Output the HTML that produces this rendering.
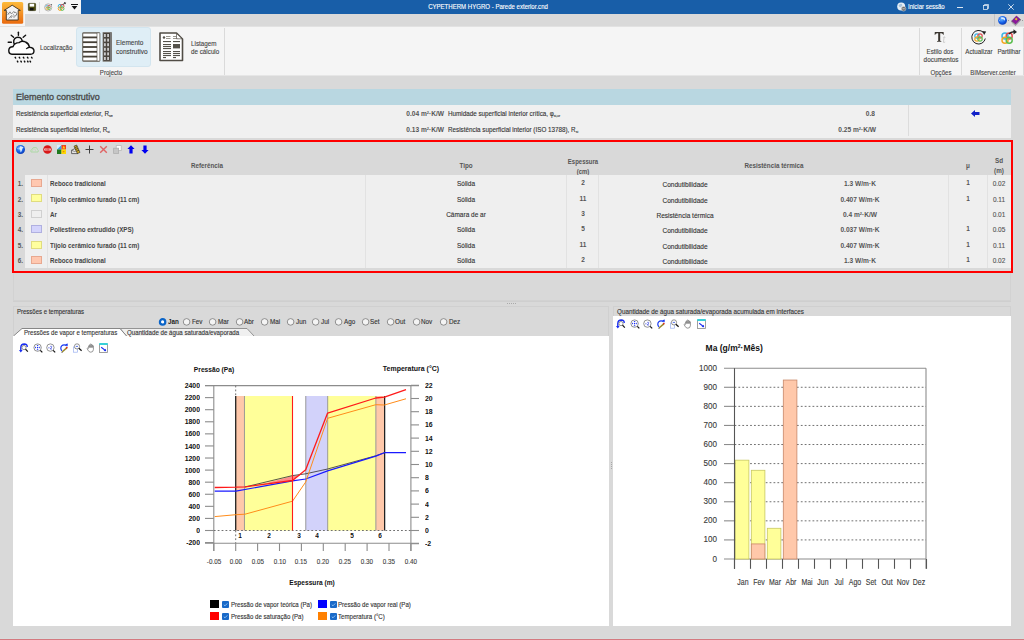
<!DOCTYPE html>
<html><head><meta charset="utf-8"><title>CYPETHERM HYGRO</title>
<style>
html,body{margin:0;padding:0;}
body{width:1024px;height:640px;overflow:hidden;position:relative;background:#d9d9d9;font-family:"Liberation Sans",sans-serif;}
.t{position:absolute;white-space:nowrap;line-height:1;font-family:"Liberation Sans",sans-serif;}
.t.lh{line-height:1}
.r{position:absolute;}
sub{font-size:55%;vertical-align:-0.3em;line-height:0}
sup{font-size:60%;vertical-align:0.55em;line-height:0}
svg.r{overflow:visible}
</style></head><body>

<div class="r" style="left:0px;top:0px;width:1024px;height:640px;background:#d9d9d9;"></div>
<div class="r" style="left:81px;top:0px;width:943px;height:14px;background:#185ea8;"></div>
<div class="r" style="left:0px;top:0px;width:81px;height:14px;background:#f5f5f5;"></div>
<div class="r" style="left:0px;top:14px;width:25px;height:12px;background:#f5f5f5;"></div>
<svg class="r" style="left:2px;top:2px;" width="22" height="22" viewBox="0 0 22 22"><defs><linearGradient id="og" x1="0" y1="0" x2="0" y2="1"><stop offset="0" stop-color="#fdbb3c"/><stop offset="1" stop-color="#ea6a0e"/></linearGradient></defs>
<rect x="0" y="0" width="21.2" height="21.8" rx="1.6" fill="url(#og)"/>
<path d="M2.1 8.4 L10.2 3.2 L18.3 8.4 L16.2 8.4 L16.2 18 L4.3 18 L4.3 8.4 Z" fill="#f4f4f4" stroke="#3c3222" stroke-width="0.9" stroke-linejoin="round"/>
<g stroke="#7a7a7a" stroke-width="0.8" fill="none"><path d="M5.6 13 L8 9.8 L9.5 12 L11.5 9.6 L13 11"/><path d="M6.5 16.5 L10 13.5 L12 15.5 L15 12"/><path d="M12.5 9.8 L15 11.4 L14 13.5"/><path d="M5.6 10.5 L7 12.2 M8.5 14 L9.5 16 M11 12.5 L12.5 13.5"/></g></svg>
<svg class="r" style="left:28px;top:3px;" width="8" height="8" viewBox="0 0 8 8"><rect x="0.4" y="0.4" width="7.2" height="7.2" rx="0.6" fill="#4b4b10" stroke="#2d2d00" stroke-width="0.6"/><rect x="1.6" y="0.8" width="4.6" height="2.8" fill="#fff"/><rect x="2" y="5" width="3.5" height="2.4" fill="#111"/></svg>
<div class="r" style="left:39px;top:2px;width:1px;height:11px;background:#dcdcdc;"></div>
<svg class="r" style="left:44px;top:3px;" width="9" height="9" viewBox="0 0 9 9"><circle cx="4.2" cy="4.4" r="3.6" fill="none" stroke="#999" stroke-width="0.7"/><circle cx="3.3" cy="3.6" r="1.3" fill="none" stroke="#3cb4e6" stroke-width="0.8"/><circle cx="5" cy="3.6" r="1.3" fill="none" stroke="#e05050" stroke-width="0.8"/><circle cx="3.3" cy="5.3" r="1.3" fill="none" stroke="#f5a623" stroke-width="0.8"/><circle cx="5" cy="5.3" r="1.3" fill="none" stroke="#5cbf50" stroke-width="0.8"/><path d="M7 1 L8.2 1.6 L7.4 2.6Z" fill="#333"/></svg>
<svg class="r" style="left:57px;top:2px;" width="9" height="10" viewBox="0 0 9 10"><circle cx="3" cy="4.2" r="1.8" fill="none" stroke="#3cb4e6" stroke-width="1"/><circle cx="5.2" cy="4.2" r="1.8" fill="none" stroke="#e05050" stroke-width="1"/><circle cx="3" cy="6.6" r="1.8" fill="none" stroke="#f5a623" stroke-width="1"/><circle cx="5.2" cy="6.6" r="1.8" fill="none" stroke="#5cbf50" stroke-width="1"/><path d="M5.5 2.8 L8 1 M7 0.6 L8.6 0.8 L8 2.2" stroke="#333" stroke-width="0.9" fill="none"/></svg>
<svg class="r" style="left:71px;top:4px;" width="7" height="6" viewBox="0 0 7 6"><rect x="0" y="0" width="7" height="1" fill="#111"/><path d="M0.6 2 L6.4 2 L3.5 5.4 Z" fill="#111"/></svg>
<div class="t" style="left:188.40px;width:600px;text-align:center;top:3.77px;font-size:6.66px;font-weight:normal;color:#ffffff;transform:scaleX(0.9091);transform-origin:50% 0;-webkit-text-stroke:0.12px #ffffff;">CYPETHERM HYGRO - Parede exterior.cnd</div>
<svg class="r" style="left:897px;top:2px;" width="10" height="10" viewBox="0 0 10 10"><circle cx="4.2" cy="4.4" r="4" fill="#e6eef5"/><path d="M1.5 3.5 Q3 1 5 2 Q6 4 4 5 Q2.5 6 1.5 3.5Z" fill="#a8c4dc"/><circle cx="6.6" cy="6.8" r="2.3" fill="#6b6b6b" stroke="#ddd" stroke-width="0.5"/><rect x="5.4" y="6.5" width="2.4" height="0.7" fill="#eee"/></svg>
<div class="t" style="left:908.30px;top:3.81px;font-size:6.60px;font-weight:normal;color:#ffffff;transform:scaleX(0.9091);transform-origin:0 0;-webkit-text-stroke:0.12px #ffffff;">Iniciar sessão</div>
<div class="r" style="left:957px;top:7px;width:6px;height:1px;background:rgba(255,255,255,0.85);"></div>
<svg class="r" style="left:983px;top:4px;" width="6" height="6" viewBox="0 0 6 6"><rect x="0.5" y="1.5" width="4" height="4" fill="none" stroke="rgba(255,255,255,0.9)" stroke-width="0.75"/><path d="M1.5 1.5 L1.5 0.5 L5.5 0.5 L5.5 4.5 L4.5 4.5" fill="none" stroke="rgba(255,255,255,0.9)" stroke-width="0.75"/></svg>
<svg class="r" style="left:1008px;top:4px;" width="6" height="6" viewBox="0 0 6 6"><path d="M0.3 0.3 L5.7 5.7 M5.7 0.3 L0.3 5.7" stroke="rgba(255,255,255,0.92)" stroke-width="0.85"/></svg>
<div class="r" style="left:994px;top:14px;width:1px;height:12px;background:#c4c4c4;"></div>
<svg class="r" style="left:998px;top:16px;" width="10" height="10" viewBox="0 0 10 10"><defs><radialGradient id="gg" cx="0.45" cy="0.35" r="0.75"><stop offset="0" stop-color="#5fb0ff"/><stop offset="0.6" stop-color="#1a66e8"/><stop offset="1" stop-color="#0838b8"/></radialGradient></defs><circle cx="4.5" cy="4.4" r="4.4" fill="url(#g2)"/><path d="M2.6 1.6 Q5 0.8 6.8 2 Q7.6 3.2 6.6 4.8 Q6 3.2 4.2 3 Q3 3.2 2.6 1.6 Z" fill="#e8f6ff" opacity="0.9"/><path d="M1 4.5 L2 3.8 L2.2 5.4 Z" fill="#d8ecff" opacity="0.7"/></svg>
<div class="r" style="left:1008px;top:20px;width:1px;height:1px;background:#9a9a9a;"></div>
<svg class="r" style="left:1011px;top:15px;" width="10" height="11" viewBox="0 0 10 11"><path d="M0.6 6.2 L5.4 1 L9.4 4.4 L4.6 9.6 Z" fill="#8a1a9a" stroke="#5a0a6a" stroke-width="0.5"/><path d="M0.6 6.2 L1 7.6 L4.6 10.6 L9.4 5.6 L9.4 4.4 L4.6 9.6 Z" fill="#d8d8d8" stroke="#555" stroke-width="0.4"/><path d="M4.8 10 L9 5.6" stroke="#b070c0" stroke-width="0.6" stroke-dasharray="0.8 0.6"/><rect x="4.2" y="3.2" width="2" height="2" fill="#f0c020" transform="rotate(40 5.2 4.2)"/></svg>
<div class="r" style="left:1022px;top:20px;width:1px;height:1px;background:#9a9a9a;"></div>
<div class="r" style="left:0px;top:26px;width:1024px;height:49px;background:#f5f5f5;"></div>
<div class="r" style="left:0px;top:26px;width:1024px;height:1px;background:#e2e2e2;"></div>
<div class="r" style="left:0px;top:75px;width:1024px;height:1px;background:#e6e6e6;"></div>
<svg class="r" style="left:0px;top:26px;" width="40" height="50" viewBox="0 0 40 50"><g stroke="#111" stroke-width="1.4" fill="none" stroke-linecap="round">
<path d="M18.4 6.2 L18.4 9.2"/><path d="M11.2 9.2 L13.6 11.2"/><path d="M23.2 11.2 L25.6 9.2"/><path d="M8.2 16.2 L11.4 16.2"/>
<path d="M14.6 18.2 A4.3 4.3 0 1 1 22.2 14.8"/></g>
<path d="M12 28.2 Q8.6 28 8.8 24.2 Q9.2 20.6 13 20.8 Q14.5 16.6 19 16.6 Q22 14.2 25.5 16 Q29 17.6 29.4 21.2 Q34 21.6 34 25 Q33.8 28.2 30.5 28.2 Z" fill="#fff" stroke="#111" stroke-width="1.4" stroke-linejoin="round"/>
<path d="M29.4 21.3 Q27.4 21.5 26.2 23" fill="none" stroke="#111" stroke-width="1.2"/>
<g stroke="#111" stroke-width="1.5" stroke-linecap="round">
<path d="M15.2 31.3 L15.6 32"/><path d="M19.3 31.3 L19.7 32"/><path d="M23.4 31.3 L23.8 32"/><path d="M27.5 31.3 L27.9 32"/><path d="M31.6 31.3 L32 32"/>
<path d="M17.4 35.2 L17.8 35.9"/><path d="M20.9 35.2 L21.3 35.9"/><path d="M24.4 35.2 L24.8 35.9"/><path d="M27.6 35.2 L28 35.9"/><path d="M30.1 35.2 L30.5 35.9"/></g></svg>
<div class="t" style="left:39.80px;top:43.75px;font-size:7.38px;font-weight:normal;color:#444;transform:scaleX(0.8333);transform-origin:0 0;-webkit-text-stroke:0.12px #444;">Localização</div>
<div class="r" style="left:76px;top:27px;width:75px;height:40px;background:#dfeef6;border-radius:3px;box-sizing:border-box;border:1px solid #d3e5ef;"></div>
<svg class="r" style="left:82px;top:32px;" width="31" height="30" viewBox="0 0 31 30"><rect x="0.5" y="0.5" width="17.5" height="29" rx="1" fill="#464037" stroke="#7a766f" stroke-width="0.8"/><rect x="1.2" y="1.5" width="13.5" height="3" fill="#fff"/><rect x="1.2" y="6.3" width="13.5" height="3" fill="#fff"/><rect x="1.2" y="11.1" width="13.5" height="3" fill="#fff"/><rect x="1.2" y="15.9" width="13.5" height="3" fill="#fff"/><rect x="1.2" y="20.7" width="13.5" height="3" fill="#fff"/><rect x="1.2" y="25.5" width="13.5" height="3" fill="#fff"/><rect x="15.3" y="1.2" width="2.2" height="27.6" fill="#fff"/>
<rect x="21" y="0.6" width="8.5" height="28.6" fill="#4a453e" stroke="#7a766f" stroke-width="0.8"/><rect x="22" y="2.0" width="1.8" height="3" fill="#ccc"/><rect x="25.2" y="2.0" width="1.8" height="3" fill="#ccc"/><rect x="22" y="6.6" width="1.8" height="3" fill="#ccc"/><rect x="25.2" y="6.6" width="1.8" height="3" fill="#ccc"/><rect x="22" y="11.2" width="1.8" height="3" fill="#ccc"/><rect x="25.2" y="11.2" width="1.8" height="3" fill="#ccc"/><rect x="22" y="15.8" width="1.8" height="3" fill="#ccc"/><rect x="25.2" y="15.8" width="1.8" height="3" fill="#ccc"/><rect x="22" y="20.4" width="1.8" height="3" fill="#ccc"/><rect x="25.2" y="20.4" width="1.8" height="3" fill="#ccc"/><rect x="22" y="25.0" width="1.8" height="3" fill="#ccc"/><rect x="25.2" y="25.0" width="1.8" height="3" fill="#ccc"/><rect x="28" y="0.6" width="1.5" height="28.6" fill="#777"/></svg>
<div class="t" style="left:115.80px;top:39.40px;font-size:7.80px;font-weight:normal;color:#444;transform:scaleX(0.8333);transform-origin:0 0;-webkit-text-stroke:0.12px #444;">Elemento</div>
<div class="t" style="left:115.80px;top:47.55px;font-size:7.86px;font-weight:normal;color:#444;transform:scaleX(0.8333);transform-origin:0 0;-webkit-text-stroke:0.12px #444;">construtivo</div>
<div class="t" style="left:-188.70px;width:600px;text-align:center;top:69.52px;font-size:6.71px;font-weight:normal;color:#444;transform:scaleX(0.9091);transform-origin:50% 0;-webkit-text-stroke:0.12px #444;">Projecto</div>
<svg class="r" style="left:159px;top:32px;" width="25" height="30" viewBox="0 0 25 30"><path d="M1 1 L17.5 1 L23.5 7 L23.5 28.5 L1 28.5 Z" fill="#fff" stroke="#514d46" stroke-width="1.6" stroke-linejoin="round"/><g fill="#55524b"><rect x="4" y="9" width="8" height="1.1"/><rect x="4" y="12" width="8" height="1.1"/><rect x="4" y="14" width="8" height="1.1"/><rect x="4" y="16" width="8" height="1.1"/><rect x="4" y="19" width="8" height="1.1"/><rect x="4" y="21" width="8" height="1.1"/><rect x="4" y="23" width="8" height="1.1"/><rect x="14" y="9" width="7" height="1.1"/><rect x="14" y="19" width="7" height="1.1"/><rect x="14" y="21" width="7" height="1.1"/><rect x="14" y="23" width="7" height="1.1"/><rect x="4" y="25" width="3" height="1.1"/><rect x="14" y="25" width="3" height="1.1"/><rect x="14" y="12" width="7" height="4.4"/><circle cx="5" cy="5.5" r="1.2"/><rect x="7" y="4" width="4.5" height="1" fill="#9a978f"/><rect x="7" y="6" width="4.5" height="1" fill="#9a978f"/><rect x="14" y="4" width="3.5" height="1" fill="#9a978f"/><rect x="14" y="6" width="5" height="1" fill="#9a978f"/></g><path d="M17.5 1.5 L17.5 6.8 L23 6.8 Z" fill="#fff" stroke="#514d46" stroke-width="0.7"/></svg>
<div class="t" style="left:191.00px;top:39.62px;font-size:7.54px;font-weight:normal;color:#444;transform:scaleX(0.8333);transform-origin:0 0;-webkit-text-stroke:0.12px #444;">Listagem</div>
<div class="t" style="left:191.00px;top:48.02px;font-size:7.54px;font-weight:normal;color:#444;transform:scaleX(0.8333);transform-origin:0 0;-webkit-text-stroke:0.12px #444;">de cálculo</div>
<div class="r" style="left:224px;top:28px;width:1px;height:47px;background:#dadada;"></div>
<div class="r" style="left:919px;top:28px;width:1px;height:47px;background:#dadada;"></div>
<div class="r" style="left:961px;top:28px;width:1px;height:47px;background:#dadada;"></div>
<div class="r" style="left:1023px;top:28px;width:1px;height:47px;background:#dadada;"></div>
<svg class="r" style="left:934px;top:31px;" width="14" height="13" viewBox="0 0 14 13"><path d="M0.8 1 L9.6 1 L9.8 3.8 L9.2 3.8 Q8.8 2.2 7.2 2.2 L6.2 2.2 L6.2 9.8 L7.4 10.2 L7.4 10.8 L3 10.8 L3 10.2 L4.2 9.8 L4.2 2.2 L3.2 2.2 Q1.6 2.2 1.2 3.8 L0.6 3.8 Z" fill="#3a3630"/>
<path d="M9.6 6 L10.6 4.8 L10.6 6.2 L11.6 6.2 L11.5 6.8 L10.5 6.8 L10 10.5 Q10.2 11.2 11.2 10.6 L11.2 11.2 Q9.6 12.4 9.1 11.2 L9.5 6.8 L8.8 6.8 Z" fill="#c8c8c8"/></svg>
<div class="t" style="left:640.20px;width:600px;text-align:center;top:49.23px;font-size:6.82px;font-weight:normal;color:#444;transform:scaleX(0.9091);transform-origin:50% 0;-webkit-text-stroke:0.12px #444;">Estilo dos</div>
<div class="t" style="left:640.60px;width:600px;text-align:center;top:55.94px;font-size:7.04px;font-weight:normal;color:#444;transform:scaleX(0.9091);transform-origin:50% 0;-webkit-text-stroke:0.12px #444;">documentos</div>
<div class="t" style="left:640.60px;width:600px;text-align:center;top:69.52px;font-size:6.71px;font-weight:normal;color:#444;transform:scaleX(0.9091);transform-origin:50% 0;-webkit-text-stroke:0.12px #444;">Opções</div>
<svg class="r" style="left:971px;top:30px;" width="16" height="15" viewBox="0 0 16 15"><path d="M12.5 2.5 A6.8 6.8 0 1 0 14.3 8.5" fill="none" stroke="#222" stroke-width="1"/><path d="M11 1 L15.2 1.6 L13.2 5 Z" fill="#222"/>
<circle cx="6" cy="6" r="2.2" fill="none" stroke="#3cb4e6" stroke-width="1.2"/><circle cx="9" cy="6" r="2.2" fill="none" stroke="#e05050" stroke-width="1.2"/><circle cx="6" cy="9" r="2.2" fill="none" stroke="#f5a623" stroke-width="1.2"/><circle cx="9" cy="9" r="2.2" fill="none" stroke="#5cbf50" stroke-width="1.2"/></svg>
<div class="t" style="left:679.10px;width:600px;text-align:center;top:48.61px;font-size:6.84px;font-weight:normal;color:#444;transform:scaleX(0.9091);transform-origin:50% 0;-webkit-text-stroke:0.12px #444;">Actualizar</div>
<svg class="r" style="left:1000px;top:29px;" width="18" height="16" viewBox="0 0 18 16"><circle cx="5" cy="7" r="3" fill="none" stroke="#3cb4e6" stroke-width="1.5"/><circle cx="9.2" cy="7" r="3" fill="none" stroke="#e05050" stroke-width="1.5"/><circle cx="5" cy="11.2" r="3" fill="none" stroke="#f5a623" stroke-width="1.5"/><circle cx="9.2" cy="11.2" r="3" fill="none" stroke="#5cbf50" stroke-width="1.5"/><path d="M9 5 Q11 2.5 14.5 2.8" fill="none" stroke="#222" stroke-width="1.6"/><path d="M13.5 0.3 L17 3 L13.5 5.5 Z" fill="#222"/></svg>
<div class="t" style="left:708.60px;width:600px;text-align:center;top:48.61px;font-size:6.84px;font-weight:normal;color:#444;transform:scaleX(0.9091);transform-origin:50% 0;-webkit-text-stroke:0.12px #444;">Partilhar</div>
<div class="t" style="left:693.00px;width:600px;text-align:center;top:69.59px;font-size:6.62px;font-weight:normal;color:#444;transform:scaleX(0.9091);transform-origin:50% 0;-webkit-text-stroke:0.12px #444;">BIMserver.center</div>
<div class="r" style="left:13px;top:89px;width:998px;height:16px;background:#b9d7e1;"></div>
<div class="t" style="left:15.50px;top:92.12px;font-size:9.90px;font-weight:normal;color:#4a4a4a;transform:scaleX(0.9091);transform-origin:0 0;-webkit-text-stroke:0.35px #4a4a4a;">Elemento construtivo</div>
<div class="r" style="left:13px;top:105px;width:998px;height:33px;background:#f0f0f0;"></div>
<div class="t" style="left:15.50px;top:110.73px;font-size:6.93px;font-weight:normal;color:#333;transform:scaleX(0.9091);transform-origin:0 0;-webkit-text-stroke:0.12px #333;">Resistência superficial exterior, R<sub>se</sub></div>
<div class="t" style="left:15.50px;top:126.53px;font-size:6.93px;font-weight:normal;color:#333;transform:scaleX(0.9091);transform-origin:0 0;-webkit-text-stroke:0.12px #333;">Resistência superficial interior, R<sub>si</sub></div>
<div class="t" style="left:-156.50px;width:600px;text-align:right;top:110.45px;font-size:7.26px;font-weight:bold;color:#555;transform:scaleX(0.9091);transform-origin:100% 0;">0.04 m<sup>2</sup>·K/W</div>
<div class="t" style="left:-156.50px;width:600px;text-align:right;top:126.25px;font-size:7.26px;font-weight:bold;color:#555;transform:scaleX(0.9091);transform-origin:100% 0;">0.13 m<sup>2</sup>·K/W</div>
<div class="t" style="left:448.00px;top:110.73px;font-size:6.93px;font-weight:normal;color:#333;transform:scaleX(0.9091);transform-origin:0 0;-webkit-text-stroke:0.12px #333;">Humidade superficial interior crítica, φ<sub>si,cr</sub></div>
<div class="t" style="left:448.00px;top:126.53px;font-size:6.93px;font-weight:normal;color:#333;transform:scaleX(0.9091);transform-origin:0 0;-webkit-text-stroke:0.12px #333;">Resistência superficial interior (ISO 13788), R<sub>si</sub></div>
<div class="t" style="left:275.00px;width:600px;text-align:right;top:110.45px;font-size:7.26px;font-weight:bold;color:#555;transform:scaleX(0.9091);transform-origin:100% 0;">0.8</div>
<div class="t" style="left:276.00px;width:600px;text-align:right;top:126.25px;font-size:7.26px;font-weight:bold;color:#555;transform:scaleX(0.9091);transform-origin:100% 0;">0.25 m<sup>2</sup>·K/W</div>
<div class="r" style="left:908px;top:105px;width:1px;height:31px;background:#dcdcdc;"></div>
<svg class="r" style="left:971px;top:110px;" width="9" height="7" viewBox="0 0 9 7"><path d="M0 3.5 L4 0 L4 2 L8.5 2 L8.5 5 L4 5 L4 7 Z" fill="#1020c8"/></svg>
<div class="r" style="left:12px;top:140px;width:1001px;height:133px;background:#d9d9d9;box-sizing:border-box;border:2px solid #ff0000;"></div>
<svg class="r" style="left:16px;top:145px;" width="9" height="9" viewBox="0 0 9 9"><defs><radialGradient id="g2" cx="0.4" cy="0.35" r="0.75"><stop offset="0" stop-color="#6ab8ff"/><stop offset="0.55" stop-color="#1560e8"/><stop offset="1" stop-color="#0a2ea0"/></radialGradient></defs><circle cx="4.5" cy="4.5" r="4.5" fill="url(#g2)"/><path d="M4 1.2 Q6.5 0.8 7.6 2.8 L6.4 3.6 L5.6 6.2 L4.6 7.6 L4.2 5 L3.2 4 Z" fill="#f0f6ff" opacity="0.9"/><path d="M1.2 3.5 L2.6 2.6 L2.4 4.6 Z" fill="#dfeeff" opacity="0.8"/></svg>
<svg class="r" style="left:30px;top:146px;" width="9" height="7" viewBox="0 0 9 7"><path d="M1 6 Q0 4 2 3.5 Q2.5 1 5 1.5 Q7 1 7.5 3.5 Q9 4.5 8 6 Z" fill="none" stroke="#a8d8a0" stroke-width="0.9"/><path d="M2.5 5.5 L2.5 3.8 L4 2.8 L5.5 3.8 L5.5 5.5" fill="none" stroke="#b8e0b0" stroke-width="0.6"/></svg>
<svg class="r" style="left:43px;top:145px;" width="9" height="9" viewBox="0 0 9 9"><circle cx="4.5" cy="4.5" r="4.3" fill="#d81818"/><rect x="1.2" y="3.4" width="6.6" height="2.2" rx="0.4" fill="#f8d8d8"/><path d="M2 4.5 L3 4.5 M3.6 3.8 L3.6 5.2 M4.6 3.8 L5.4 3.8 L5.4 5.2 L4.6 5.2 Z M6.2 3.8 L6.2 5.2" stroke="#d81818" stroke-width="0.5" fill="none"/></svg>
<svg class="r" style="left:57px;top:145px;" width="9" height="9" viewBox="0 0 9 9"><rect x="0" y="0" width="4.5" height="4.5" fill="#3aa0e8"/><path d="M0 0 L4.5 0 L0 4.5 Z" fill="#d8f0ff"/><rect x="4.5" y="0" width="4.5" height="4.5" fill="#f04020"/><path d="M6.8 0.6 L8.2 3.4 L5.4 3.4 Z" fill="#ffd800"/><rect x="0" y="4.5" width="4.5" height="4.5" fill="#1e7a1e"/><rect x="4.5" y="4.5" width="4.5" height="4.5" fill="#ffd800"/><rect x="5.8" y="6.2" width="1.6" height="1" fill="#e07010"/></svg>
<svg class="r" style="left:71px;top:145px;" width="9" height="9" viewBox="0 0 9 9"><path d="M0.6 5.2 L3.6 3.8 L6.6 5.2 L6.6 8.6 L0.6 8.6 Z" fill="#e8e8e8" stroke="#333" stroke-width="0.7"/><path d="M0.6 5.2 L3.6 6.6 L6.6 5.2" fill="none" stroke="#333" stroke-width="0.5"/><path d="M3 1.2 L5.6 0 L9 7.4 L6.4 8.6 Z" fill="#d8b020" stroke="#222" stroke-width="0.6"/><path d="M4 2.6 L6.2 1.6 M4.9 4.4 L7.1 3.4 M5.8 6.2 L8 5.2" stroke="#222" stroke-width="0.7"/></svg>
<svg class="r" style="left:85px;top:145px;" width="9" height="9" viewBox="0 0 9 9"><path d="M4.5 0.5 L4.5 8.5 M0.5 4.5 L8.5 4.5" stroke="#404040" stroke-width="1"/></svg>
<svg class="r" style="left:99px;top:145px;" width="9" height="9" viewBox="0 0 9 9"><path d="M1.2 1.2 L7.8 7.8 M7.8 1.2 L1.2 7.8" stroke="#e06464" stroke-width="1.4"/></svg>
<svg class="r" style="left:113px;top:145px;" width="9" height="9" viewBox="0 0 9 9"><rect x="3.2" y="0.6" width="5" height="5" fill="#fff" stroke="#b8b8b8" stroke-width="0.8"/><rect x="0.6" y="3.2" width="5" height="5.2" fill="#c6c6c6" stroke="#b0b0b0" stroke-width="0.8"/></svg>
<svg class="r" style="left:127px;top:145px;" width="8" height="9" viewBox="0 0 8 9"><path d="M4 0.3 L7.6 4 L5.6 4 L5.6 8.4 L2.4 8.4 L2.4 4 L0.4 4 Z" fill="#0000f0"/></svg>
<svg class="r" style="left:141px;top:145px;" width="8" height="9" viewBox="0 0 8 9"><path d="M4 8.7 L7.6 5 L5.6 5 L5.6 0.6 L2.4 0.6 L2.4 5 L0.4 5 Z" fill="#0000f0"/></svg>
<div class="t" style="left:-93.20px;width:600px;text-align:center;top:162.63px;font-size:6.93px;font-weight:bold;color:#555;transform:scaleX(0.9091);transform-origin:50% 0;">Referência</div>
<div class="t" style="left:166.00px;width:600px;text-align:center;top:162.63px;font-size:6.93px;font-weight:bold;color:#555;transform:scaleX(0.9091);transform-origin:50% 0;">Tipo</div>
<div class="t" style="left:282.50px;width:600px;text-align:center;top:159.01px;font-size:6.60px;font-weight:bold;color:#555;transform:scaleX(0.9091);transform-origin:50% 0;">Espessura</div>
<div class="t" style="left:282.50px;width:600px;text-align:center;top:168.61px;font-size:6.60px;font-weight:bold;color:#555;transform:scaleX(0.9091);transform-origin:50% 0;">(cm)</div>
<div class="t" style="left:474.00px;width:600px;text-align:center;top:162.63px;font-size:6.93px;font-weight:bold;color:#555;transform:scaleX(0.9091);transform-origin:50% 0;">Resistência térmica</div>
<div class="t" style="left:668.00px;width:600px;text-align:center;top:162.63px;font-size:6.93px;font-weight:bold;color:#555;transform:scaleX(0.9091);transform-origin:50% 0;">μ</div>
<div class="t" style="left:699.00px;width:600px;text-align:center;top:158.03px;font-size:6.93px;font-weight:bold;color:#555;transform:scaleX(0.9091);transform-origin:50% 0;">Sd</div>
<div class="t" style="left:699.00px;width:600px;text-align:center;top:167.73px;font-size:6.93px;font-weight:bold;color:#555;transform:scaleX(0.9091);transform-origin:50% 0;">(m)</div>
<div class="r" style="left:25px;top:175px;width:986px;height:93px;background:#efefef;"></div>
<div class="r" style="left:47px;top:175px;width:1px;height:93px;background:#e2e2e2;"></div>
<div class="r" style="left:365px;top:175px;width:1px;height:93px;background:#e2e2e2;"></div>
<div class="r" style="left:566px;top:175px;width:1px;height:93px;background:#e2e2e2;"></div>
<div class="r" style="left:598px;top:175px;width:1px;height:93px;background:#e2e2e2;"></div>
<div class="r" style="left:948px;top:175px;width:1px;height:93px;background:#e2e2e2;"></div>
<div class="r" style="left:987px;top:175px;width:1px;height:93px;background:#e2e2e2;"></div>
<div class="t" style="left:-577.50px;width:600px;text-align:right;top:180.63px;font-size:6.93px;font-weight:bold;color:#555;transform:scaleX(0.9091);transform-origin:100% 0;">1.</div>
<div class="r" style="left:31px;top:179px;width:11px;height:8px;background:#ffc8b0;box-sizing:border-box;border:1px solid #e8a890;"></div>
<div class="t" style="left:49.75px;top:180.73px;font-size:6.82px;font-weight:bold;color:#444;transform:scaleX(0.9091);transform-origin:0 0;">Reboco tradicional</div>
<div class="t" style="left:166.00px;width:600px;text-align:center;top:181.05px;font-size:7.15px;font-weight:normal;color:#333;transform:scaleX(0.9091);transform-origin:50% 0;-webkit-text-stroke:0.12px #333;">Sólida</div>
<div class="t" style="left:282.50px;width:600px;text-align:center;top:180.45px;font-size:7.15px;font-weight:bold;color:#555;transform:scaleX(0.9091);transform-origin:50% 0;">2</div>
<div class="t" style="left:385.00px;width:600px;text-align:center;top:181.00px;font-size:7.21px;font-weight:normal;color:#333;transform:scaleX(0.9091);transform-origin:50% 0;-webkit-text-stroke:0.12px #333;">Condutibilidade</div>
<div class="t" style="left:559.50px;width:600px;text-align:center;top:180.35px;font-size:7.26px;font-weight:bold;color:#555;transform:scaleX(0.9091);transform-origin:50% 0;">1.3 W/m·K</div>
<div class="t" style="left:668.00px;width:600px;text-align:center;top:180.45px;font-size:7.15px;font-weight:bold;color:#555;transform:scaleX(0.9091);transform-origin:50% 0;">1</div>
<div class="t" style="left:699.00px;width:600px;text-align:center;top:181.05px;font-size:7.15px;font-weight:normal;color:#555;transform:scaleX(0.9091);transform-origin:50% 0;-webkit-text-stroke:0.12px #555;">0.02</div>
<div class="t" style="left:-577.50px;width:600px;text-align:right;top:196.63px;font-size:6.93px;font-weight:bold;color:#555;transform:scaleX(0.9091);transform-origin:100% 0;">2.</div>
<div class="r" style="left:31px;top:194px;width:11px;height:8px;background:#ffff9e;box-sizing:border-box;border:1px solid #e0dc80;"></div>
<div class="t" style="left:49.75px;top:196.73px;font-size:6.82px;font-weight:bold;color:#444;transform:scaleX(0.9091);transform-origin:0 0;">Tijolo cerâmico furado (11 cm)</div>
<div class="t" style="left:166.00px;width:600px;text-align:center;top:197.05px;font-size:7.15px;font-weight:normal;color:#333;transform:scaleX(0.9091);transform-origin:50% 0;-webkit-text-stroke:0.12px #333;">Sólida</div>
<div class="t" style="left:282.50px;width:600px;text-align:center;top:196.45px;font-size:7.15px;font-weight:bold;color:#555;transform:scaleX(0.9091);transform-origin:50% 0;">11</div>
<div class="t" style="left:385.00px;width:600px;text-align:center;top:197.00px;font-size:7.21px;font-weight:normal;color:#333;transform:scaleX(0.9091);transform-origin:50% 0;-webkit-text-stroke:0.12px #333;">Condutibilidade</div>
<div class="t" style="left:559.50px;width:600px;text-align:center;top:196.35px;font-size:7.26px;font-weight:bold;color:#555;transform:scaleX(0.9091);transform-origin:50% 0;">0.407 W/m·K</div>
<div class="t" style="left:668.00px;width:600px;text-align:center;top:196.45px;font-size:7.15px;font-weight:bold;color:#555;transform:scaleX(0.9091);transform-origin:50% 0;">1</div>
<div class="t" style="left:699.00px;width:600px;text-align:center;top:197.05px;font-size:7.15px;font-weight:normal;color:#555;transform:scaleX(0.9091);transform-origin:50% 0;-webkit-text-stroke:0.12px #555;">0.11</div>
<div class="t" style="left:-577.50px;width:600px;text-align:right;top:211.63px;font-size:6.93px;font-weight:bold;color:#555;transform:scaleX(0.9091);transform-origin:100% 0;">3.</div>
<div class="r" style="left:31px;top:210px;width:11px;height:8px;background:#efefef;box-sizing:border-box;border:1px solid #d0d0d0;"></div>
<div class="t" style="left:49.75px;top:211.73px;font-size:6.82px;font-weight:bold;color:#444;transform:scaleX(0.9091);transform-origin:0 0;">Ar</div>
<div class="t" style="left:166.00px;width:600px;text-align:center;top:212.05px;font-size:7.15px;font-weight:normal;color:#333;transform:scaleX(0.9091);transform-origin:50% 0;-webkit-text-stroke:0.12px #333;">Câmara de ar</div>
<div class="t" style="left:282.50px;width:600px;text-align:center;top:211.45px;font-size:7.15px;font-weight:bold;color:#555;transform:scaleX(0.9091);transform-origin:50% 0;">3</div>
<div class="t" style="left:385.00px;width:600px;text-align:center;top:212.00px;font-size:7.21px;font-weight:normal;color:#333;transform:scaleX(0.9091);transform-origin:50% 0;-webkit-text-stroke:0.12px #333;">Resistência térmica</div>
<div class="t" style="left:559.50px;width:600px;text-align:center;top:211.35px;font-size:7.26px;font-weight:bold;color:#555;transform:scaleX(0.9091);transform-origin:50% 0;">0.4 m<sup>2</sup>·K/W</div>
<div class="t" style="left:668.00px;width:600px;text-align:center;top:211.45px;font-size:7.15px;font-weight:bold;color:#555;transform:scaleX(0.9091);transform-origin:50% 0;"></div>
<div class="t" style="left:699.00px;width:600px;text-align:center;top:212.05px;font-size:7.15px;font-weight:normal;color:#555;transform:scaleX(0.9091);transform-origin:50% 0;-webkit-text-stroke:0.12px #555;">0.01</div>
<div class="t" style="left:-577.50px;width:600px;text-align:right;top:226.63px;font-size:6.93px;font-weight:bold;color:#555;transform:scaleX(0.9091);transform-origin:100% 0;">4.</div>
<div class="r" style="left:31px;top:225px;width:11px;height:8px;background:#d4d4fc;box-sizing:border-box;border:1px solid #b0b0e0;"></div>
<div class="t" style="left:49.75px;top:226.73px;font-size:6.82px;font-weight:bold;color:#444;transform:scaleX(0.9091);transform-origin:0 0;">Poliestireno extrudido (XPS)</div>
<div class="t" style="left:166.00px;width:600px;text-align:center;top:227.05px;font-size:7.15px;font-weight:normal;color:#333;transform:scaleX(0.9091);transform-origin:50% 0;-webkit-text-stroke:0.12px #333;">Sólida</div>
<div class="t" style="left:282.50px;width:600px;text-align:center;top:226.45px;font-size:7.15px;font-weight:bold;color:#555;transform:scaleX(0.9091);transform-origin:50% 0;">5</div>
<div class="t" style="left:385.00px;width:600px;text-align:center;top:227.00px;font-size:7.21px;font-weight:normal;color:#333;transform:scaleX(0.9091);transform-origin:50% 0;-webkit-text-stroke:0.12px #333;">Condutibilidade</div>
<div class="t" style="left:559.50px;width:600px;text-align:center;top:226.35px;font-size:7.26px;font-weight:bold;color:#555;transform:scaleX(0.9091);transform-origin:50% 0;">0.037 W/m·K</div>
<div class="t" style="left:668.00px;width:600px;text-align:center;top:226.45px;font-size:7.15px;font-weight:bold;color:#555;transform:scaleX(0.9091);transform-origin:50% 0;">1</div>
<div class="t" style="left:699.00px;width:600px;text-align:center;top:227.05px;font-size:7.15px;font-weight:normal;color:#555;transform:scaleX(0.9091);transform-origin:50% 0;-webkit-text-stroke:0.12px #555;">0.05</div>
<div class="t" style="left:-577.50px;width:600px;text-align:right;top:242.63px;font-size:6.93px;font-weight:bold;color:#555;transform:scaleX(0.9091);transform-origin:100% 0;">5.</div>
<div class="r" style="left:31px;top:241px;width:11px;height:8px;background:#ffff9e;box-sizing:border-box;border:1px solid #e0dc80;"></div>
<div class="t" style="left:49.75px;top:242.73px;font-size:6.82px;font-weight:bold;color:#444;transform:scaleX(0.9091);transform-origin:0 0;">Tijolo cerâmico furado (11 cm)</div>
<div class="t" style="left:166.00px;width:600px;text-align:center;top:243.05px;font-size:7.15px;font-weight:normal;color:#333;transform:scaleX(0.9091);transform-origin:50% 0;-webkit-text-stroke:0.12px #333;">Sólida</div>
<div class="t" style="left:282.50px;width:600px;text-align:center;top:242.45px;font-size:7.15px;font-weight:bold;color:#555;transform:scaleX(0.9091);transform-origin:50% 0;">11</div>
<div class="t" style="left:385.00px;width:600px;text-align:center;top:243.00px;font-size:7.21px;font-weight:normal;color:#333;transform:scaleX(0.9091);transform-origin:50% 0;-webkit-text-stroke:0.12px #333;">Condutibilidade</div>
<div class="t" style="left:559.50px;width:600px;text-align:center;top:242.35px;font-size:7.26px;font-weight:bold;color:#555;transform:scaleX(0.9091);transform-origin:50% 0;">0.407 W/m·K</div>
<div class="t" style="left:668.00px;width:600px;text-align:center;top:242.45px;font-size:7.15px;font-weight:bold;color:#555;transform:scaleX(0.9091);transform-origin:50% 0;">1</div>
<div class="t" style="left:699.00px;width:600px;text-align:center;top:243.05px;font-size:7.15px;font-weight:normal;color:#555;transform:scaleX(0.9091);transform-origin:50% 0;-webkit-text-stroke:0.12px #555;">0.11</div>
<div class="t" style="left:-577.50px;width:600px;text-align:right;top:257.63px;font-size:6.93px;font-weight:bold;color:#555;transform:scaleX(0.9091);transform-origin:100% 0;">6.</div>
<div class="r" style="left:31px;top:256px;width:11px;height:8px;background:#ffc8b0;box-sizing:border-box;border:1px solid #e8a890;"></div>
<div class="t" style="left:49.75px;top:257.73px;font-size:6.82px;font-weight:bold;color:#444;transform:scaleX(0.9091);transform-origin:0 0;">Reboco tradicional</div>
<div class="t" style="left:166.00px;width:600px;text-align:center;top:258.05px;font-size:7.15px;font-weight:normal;color:#333;transform:scaleX(0.9091);transform-origin:50% 0;-webkit-text-stroke:0.12px #333;">Sólida</div>
<div class="t" style="left:282.50px;width:600px;text-align:center;top:257.45px;font-size:7.15px;font-weight:bold;color:#555;transform:scaleX(0.9091);transform-origin:50% 0;">2</div>
<div class="t" style="left:385.00px;width:600px;text-align:center;top:258.00px;font-size:7.21px;font-weight:normal;color:#333;transform:scaleX(0.9091);transform-origin:50% 0;-webkit-text-stroke:0.12px #333;">Condutibilidade</div>
<div class="t" style="left:559.50px;width:600px;text-align:center;top:257.35px;font-size:7.26px;font-weight:bold;color:#555;transform:scaleX(0.9091);transform-origin:50% 0;">1.3 W/m·K</div>
<div class="t" style="left:668.00px;width:600px;text-align:center;top:257.45px;font-size:7.15px;font-weight:bold;color:#555;transform:scaleX(0.9091);transform-origin:50% 0;">1</div>
<div class="t" style="left:699.00px;width:600px;text-align:center;top:258.05px;font-size:7.15px;font-weight:normal;color:#555;transform:scaleX(0.9091);transform-origin:50% 0;-webkit-text-stroke:0.12px #555;">0.02</div>
<div class="r" style="left:13px;top:273px;width:998px;height:28px;background:#d9d9d9;box-sizing:border-box;border:1px solid #d2d2d2;border-top:none;"></div>
<div class="r" style="left:13px;top:301px;width:998px;height:1px;background:#cfcfcf;"></div>
<div class="r" style="left:507px;top:303px;width:10px;height:1px;background:#bbbbbb;background:repeating-linear-gradient(90deg,#aaa 0 1px,transparent 1px 2px);"></div>
<div class="r" style="left:13px;top:306px;width:596px;height:30px;background:#d9d9d9;box-sizing:border-box;border:1px solid #d0d0d0;border-bottom:none;"></div>
<div class="t" style="left:16.60px;top:308.91px;font-size:6.60px;font-weight:normal;color:#333;transform:scaleX(0.9091);transform-origin:0 0;-webkit-text-stroke:0.12px #333;">Pressões e temperaturas</div>
<svg class="r" style="left:159px;top:317.5px;" width="8" height="8" viewBox="0 0 8 8"><circle cx="3.6" cy="3.9" r="2.7" fill="#fff" stroke="#0a64c8" stroke-width="2.2"/></svg>
<div class="t" style="left:167.60px;top:319.03px;font-size:6.93px;font-weight:bold;color:#222;transform:scaleX(0.9091);transform-origin:0 0;">Jan</div>
<svg class="r" style="left:183px;top:317.5px;" width="8" height="8" viewBox="0 0 8 8"><circle cx="3.6" cy="3.9" r="3.3" fill="#f4f4f4" stroke="#707070" stroke-width="0.75"/></svg>
<div class="t" style="left:191.60px;top:319.03px;font-size:6.93px;font-weight:normal;color:#333;transform:scaleX(0.9091);transform-origin:0 0;-webkit-text-stroke:0.12px #333;">Fev</div>
<svg class="r" style="left:209px;top:317.5px;" width="8" height="8" viewBox="0 0 8 8"><circle cx="3.6" cy="3.9" r="3.3" fill="#f4f4f4" stroke="#707070" stroke-width="0.75"/></svg>
<div class="t" style="left:217.60px;top:319.03px;font-size:6.93px;font-weight:normal;color:#333;transform:scaleX(0.9091);transform-origin:0 0;-webkit-text-stroke:0.12px #333;">Mar</div>
<svg class="r" style="left:235.6px;top:317.5px;" width="8" height="8" viewBox="0 0 8 8"><circle cx="3.6" cy="3.9" r="3.3" fill="#f4f4f4" stroke="#707070" stroke-width="0.75"/></svg>
<div class="t" style="left:244.20px;top:319.03px;font-size:6.93px;font-weight:normal;color:#333;transform:scaleX(0.9091);transform-origin:0 0;-webkit-text-stroke:0.12px #333;">Abr</div>
<svg class="r" style="left:261.2px;top:317.5px;" width="8" height="8" viewBox="0 0 8 8"><circle cx="3.6" cy="3.9" r="3.3" fill="#f4f4f4" stroke="#707070" stroke-width="0.75"/></svg>
<div class="t" style="left:269.80px;top:319.03px;font-size:6.93px;font-weight:normal;color:#333;transform:scaleX(0.9091);transform-origin:0 0;-webkit-text-stroke:0.12px #333;">Mai</div>
<svg class="r" style="left:287px;top:317.5px;" width="8" height="8" viewBox="0 0 8 8"><circle cx="3.6" cy="3.9" r="3.3" fill="#f4f4f4" stroke="#707070" stroke-width="0.75"/></svg>
<div class="t" style="left:295.60px;top:319.03px;font-size:6.93px;font-weight:normal;color:#333;transform:scaleX(0.9091);transform-origin:0 0;-webkit-text-stroke:0.12px #333;">Jun</div>
<svg class="r" style="left:312px;top:317.5px;" width="8" height="8" viewBox="0 0 8 8"><circle cx="3.6" cy="3.9" r="3.3" fill="#f4f4f4" stroke="#707070" stroke-width="0.75"/></svg>
<div class="t" style="left:320.60px;top:319.03px;font-size:6.93px;font-weight:normal;color:#333;transform:scaleX(0.9091);transform-origin:0 0;-webkit-text-stroke:0.12px #333;">Jul</div>
<svg class="r" style="left:335px;top:317.5px;" width="8" height="8" viewBox="0 0 8 8"><circle cx="3.6" cy="3.9" r="3.3" fill="#f4f4f4" stroke="#707070" stroke-width="0.75"/></svg>
<div class="t" style="left:343.60px;top:319.03px;font-size:6.93px;font-weight:normal;color:#333;transform:scaleX(0.9091);transform-origin:0 0;-webkit-text-stroke:0.12px #333;">Ago</div>
<svg class="r" style="left:361.8px;top:317.5px;" width="8" height="8" viewBox="0 0 8 8"><circle cx="3.6" cy="3.9" r="3.3" fill="#f4f4f4" stroke="#707070" stroke-width="0.75"/></svg>
<div class="t" style="left:370.40px;top:319.03px;font-size:6.93px;font-weight:normal;color:#333;transform:scaleX(0.9091);transform-origin:0 0;-webkit-text-stroke:0.12px #333;">Set</div>
<svg class="r" style="left:386.8px;top:317.5px;" width="8" height="8" viewBox="0 0 8 8"><circle cx="3.6" cy="3.9" r="3.3" fill="#f4f4f4" stroke="#707070" stroke-width="0.75"/></svg>
<div class="t" style="left:395.40px;top:319.03px;font-size:6.93px;font-weight:normal;color:#333;transform:scaleX(0.9091);transform-origin:0 0;-webkit-text-stroke:0.12px #333;">Out</div>
<svg class="r" style="left:412.8px;top:317.5px;" width="8" height="8" viewBox="0 0 8 8"><circle cx="3.6" cy="3.9" r="3.3" fill="#f4f4f4" stroke="#707070" stroke-width="0.75"/></svg>
<div class="t" style="left:421.40px;top:319.03px;font-size:6.93px;font-weight:normal;color:#333;transform:scaleX(0.9091);transform-origin:0 0;-webkit-text-stroke:0.12px #333;">Nov</div>
<svg class="r" style="left:440.3px;top:317.5px;" width="8" height="8" viewBox="0 0 8 8"><circle cx="3.6" cy="3.9" r="3.3" fill="#f4f4f4" stroke="#707070" stroke-width="0.75"/></svg>
<div class="t" style="left:448.90px;top:319.03px;font-size:6.93px;font-weight:normal;color:#333;transform:scaleX(0.9091);transform-origin:0 0;-webkit-text-stroke:0.12px #333;">Dez</div>
<svg class="r" style="left:13px;top:327px;" width="600" height="10" viewBox="0 0 600 10"><path d="M113.5 9 L107 1.5 L234 1.5 L241 9" fill="#f0f0f0" stroke="#8a8a8a" stroke-width="0.9"/>
<path d="M0.5 9 L9 1.5 L107 1.5 L113.5 9" fill="#ffffff" stroke="#7a7a7a" stroke-width="0.9"/></svg>
<div class="r" style="left:13px;top:336px;width:596px;height:290px;background:#ffffff;"></div>
<div class="t" style="left:23.75px;top:330.34px;font-size:6.69px;font-weight:normal;color:#333;transform:scaleX(0.9091);transform-origin:0 0;-webkit-text-stroke:0.12px #333;">Pressões de vapor e temperaturas</div>
<div class="t" style="left:127.00px;top:330.27px;font-size:6.77px;font-weight:normal;color:#333;transform:scaleX(0.9091);transform-origin:0 0;-webkit-text-stroke:0.12px #333;">Quantidade de água saturada/evaporada</div>
<svg class="r" style="left:19px;top:342.5px;" width="10" height="11" viewBox="0 0 10 11"><path d="M1.8 8.2 L1.8 4.5 Q2 1 5.2 1 Q8.5 1.2 8.2 4" fill="none" stroke="#1a2ef0" stroke-width="1.4"/><path d="M0 7 L1.8 9.6 L3.6 7 Z" fill="#1a2ef0"/><circle cx="5" cy="4.6" r="2.1" fill="#fff" stroke="#666" stroke-width="0.7"/><path d="M6.5 6.2 L8.8 8.6" stroke="#111" stroke-width="1.2"/></svg>
<svg class="r" style="left:33px;top:342.5px;" width="10" height="11" viewBox="0 0 10 11"><circle cx="4.6" cy="4.6" r="3.7" fill="#fff" stroke="#777" stroke-width="0.8"/><path d="M4.6 1.8 L5.6 3 L3.6 3 Z M4.6 7.4 L5.6 6.2 L3.6 6.2 Z M1.8 4.6 L3 3.6 L3 5.6 Z M7.4 4.6 L6.2 3.6 L6.2 5.6 Z" fill="#1a2ef0"/><circle cx="4.6" cy="4.6" r="0.8" fill="#1a2ef0"/><path d="M7.3 7.3 L9.3 9.3" stroke="#111" stroke-width="1.2"/></svg>
<svg class="r" style="left:46px;top:342.5px;" width="10" height="11" viewBox="0 0 10 11"><circle cx="4.4" cy="4.6" r="3.7" fill="#fff" stroke="#777" stroke-width="0.8"/><path d="M2.2 4.8 L3.6 4.8 M4.2 3.4 Q5.6 2.8 5.8 3.8 Q5.6 4.8 4.2 6 L6 6" fill="none" stroke="#3040e0" stroke-width="0.7"/><path d="M7.1 7.3 L9.2 9.4" stroke="#111" stroke-width="1.2"/></svg>
<svg class="r" style="left:59px;top:342.5px;" width="10" height="11" viewBox="0 0 10 11"><path d="M7.6 2.8 A3.4 3.4 0 1 0 3 7.8" fill="none" stroke="#1a3af0" stroke-width="1.2"/><path d="M6.2 1.2 L8.8 0.6 L8.6 3.6 Z" fill="#1a3af0"/><path d="M3 9 L7.8 4.8" stroke="#9a8a30" stroke-width="1.6"/><path d="M7.2 5.2 L8.4 4.2" stroke="#d83020" stroke-width="1.6"/><path d="M2 9.4 L4 9.4" stroke="#777" stroke-width="0.6"/></svg>
<svg class="r" style="left:73px;top:342.5px;" width="10" height="11" viewBox="0 0 10 11"><rect x="0.6" y="4" width="3.8" height="5.2" fill="none" stroke="#9ab0f0" stroke-width="0.7"/><circle cx="4" cy="3.4" r="2.6" fill="#fff" stroke="#777" stroke-width="0.8"/><path d="M2.8 3.4 L5 3.4" stroke="#3050e0" stroke-width="0.8"/><path d="M5.9 5.3 L8.6 7.8" stroke="#111" stroke-width="1.2"/></svg>
<svg class="r" style="left:86px;top:342.5px;" width="10" height="11" viewBox="0 0 10 11"><path d="M2.6 5.2 L2.6 2.8 Q3.2 2 3.8 2.8 L3.8 4.6 L3.8 1.5 Q4.4 0.7 5 1.5 L5 4.6 L5 1.8 Q5.6 1.1 6.2 1.8 L6.2 4.6 L6.2 2.8 Q6.8 2.1 7.4 2.8 L7.4 6.6 Q7.2 9.2 4.8 9.2 Q3 9.2 2 7.2 L1 5.4 Q1.6 4.6 2.6 5.6" fill="#fff" stroke="#6a6a6a" stroke-width="0.7"/></svg>
<svg class="r" style="left:99px;top:342.5px;" width="10" height="11" viewBox="0 0 10 11"><rect x="0.5" y="1.5" width="8" height="8" fill="#fff" stroke="#888" stroke-width="0.8"/><rect x="0.2" y="0" width="8.6" height="2" fill="#38d0d8"/><path d="M2.2 4.2 L6.6 7.6" stroke="#1a2ef0" stroke-width="1.1"/><path d="M7.2 8.2 L4.6 8 L6.8 5.8 Z" fill="#1a2ef0"/></svg>
<svg class="r" style="left:0;top:0" width="1024" height="640" viewBox="0 0 1024 640"><rect x="235.70" y="396.0" width="8.76" height="134.50" fill="#ffc8aa"/><rect x="244.46" y="396.0" width="48.18" height="134.50" fill="#ffff99"/><rect x="305.78" y="396.0" width="21.90" height="134.50" fill="#d2d2fa"/><rect x="327.68" y="396.0" width="48.18" height="134.50" fill="#ffff99"/><rect x="375.86" y="396.0" width="8.76" height="134.50" fill="#ffc8aa"/><line x1="235.70" y1="396.0" x2="235.70" y2="530.50" stroke="#222" stroke-width="1.3"/><line x1="244.46" y1="396.0" x2="244.46" y2="530.50" stroke="#909090" stroke-width="0.9"/><line x1="327.68" y1="396.0" x2="327.68" y2="530.50" stroke="#909090" stroke-width="0.9"/><line x1="375.86" y1="396.0" x2="375.86" y2="530.50" stroke="#909090" stroke-width="0.9"/><line x1="384.62" y1="396.0" x2="384.62" y2="530.50" stroke="#222" stroke-width="1.3"/><line x1="305.78" y1="396.0" x2="305.78" y2="530.50" stroke="#909090" stroke-width="0.9"/><line x1="205" y1="385.6" x2="419" y2="385.6" stroke="#8c8c8c" stroke-width="1.1"/><line x1="205" y1="543.2" x2="419" y2="543.2" stroke="#8c8c8c" stroke-width="1.1"/><line x1="213.80" y1="385.6" x2="213.80" y2="551" stroke="#8c8c8c" stroke-width="1.1"/><line x1="410.90" y1="385.6" x2="410.90" y2="551" stroke="#8c8c8c" stroke-width="1.1"/><line x1="205" y1="542.58" x2="213.80" y2="542.58" stroke="#8c8c8c" stroke-width="1.1"/><line x1="205" y1="530.50" x2="213.80" y2="530.50" stroke="#8c8c8c" stroke-width="1.1"/><line x1="205" y1="518.42" x2="213.80" y2="518.42" stroke="#8c8c8c" stroke-width="1.1"/><line x1="205" y1="506.34" x2="213.80" y2="506.34" stroke="#8c8c8c" stroke-width="1.1"/><line x1="205" y1="494.26" x2="213.80" y2="494.26" stroke="#8c8c8c" stroke-width="1.1"/><line x1="205" y1="482.18" x2="213.80" y2="482.18" stroke="#8c8c8c" stroke-width="1.1"/><line x1="205" y1="470.10" x2="213.80" y2="470.10" stroke="#8c8c8c" stroke-width="1.1"/><line x1="205" y1="458.02" x2="213.80" y2="458.02" stroke="#8c8c8c" stroke-width="1.1"/><line x1="205" y1="445.94" x2="213.80" y2="445.94" stroke="#8c8c8c" stroke-width="1.1"/><line x1="205" y1="433.86" x2="213.80" y2="433.86" stroke="#8c8c8c" stroke-width="1.1"/><line x1="205" y1="421.78" x2="213.80" y2="421.78" stroke="#8c8c8c" stroke-width="1.1"/><line x1="205" y1="409.70" x2="213.80" y2="409.70" stroke="#8c8c8c" stroke-width="1.1"/><line x1="205" y1="397.62" x2="213.80" y2="397.62" stroke="#8c8c8c" stroke-width="1.1"/><line x1="205" y1="385.54" x2="213.80" y2="385.54" stroke="#8c8c8c" stroke-width="1.1"/><line x1="410.90" y1="543.70" x2="419" y2="543.70" stroke="#8c8c8c" stroke-width="1.1"/><line x1="410.90" y1="530.50" x2="419" y2="530.50" stroke="#8c8c8c" stroke-width="1.1"/><line x1="410.90" y1="517.30" x2="419" y2="517.30" stroke="#8c8c8c" stroke-width="1.1"/><line x1="410.90" y1="504.10" x2="419" y2="504.10" stroke="#8c8c8c" stroke-width="1.1"/><line x1="410.90" y1="490.90" x2="419" y2="490.90" stroke="#8c8c8c" stroke-width="1.1"/><line x1="410.90" y1="477.70" x2="419" y2="477.70" stroke="#8c8c8c" stroke-width="1.1"/><line x1="410.90" y1="464.50" x2="419" y2="464.50" stroke="#8c8c8c" stroke-width="1.1"/><line x1="410.90" y1="451.30" x2="419" y2="451.30" stroke="#8c8c8c" stroke-width="1.1"/><line x1="410.90" y1="438.10" x2="419" y2="438.10" stroke="#8c8c8c" stroke-width="1.1"/><line x1="410.90" y1="424.90" x2="419" y2="424.90" stroke="#8c8c8c" stroke-width="1.1"/><line x1="410.90" y1="411.70" x2="419" y2="411.70" stroke="#8c8c8c" stroke-width="1.1"/><line x1="410.90" y1="398.50" x2="419" y2="398.50" stroke="#8c8c8c" stroke-width="1.1"/><line x1="410.90" y1="385.30" x2="419" y2="385.30" stroke="#8c8c8c" stroke-width="1.1"/><line x1="213.80" y1="543.2" x2="213.80" y2="551" stroke="#8c8c8c" stroke-width="1.1"/><line x1="235.70" y1="543.2" x2="235.70" y2="551" stroke="#8c8c8c" stroke-width="1.1"/><line x1="257.60" y1="543.2" x2="257.60" y2="551" stroke="#8c8c8c" stroke-width="1.1"/><line x1="279.50" y1="543.2" x2="279.50" y2="551" stroke="#8c8c8c" stroke-width="1.1"/><line x1="301.40" y1="543.2" x2="301.40" y2="551" stroke="#8c8c8c" stroke-width="1.1"/><line x1="323.30" y1="543.2" x2="323.30" y2="551" stroke="#8c8c8c" stroke-width="1.1"/><line x1="345.20" y1="543.2" x2="345.20" y2="551" stroke="#8c8c8c" stroke-width="1.1"/><line x1="367.10" y1="543.2" x2="367.10" y2="551" stroke="#8c8c8c" stroke-width="1.1"/><line x1="389.00" y1="543.2" x2="389.00" y2="551" stroke="#8c8c8c" stroke-width="1.1"/><line x1="410.90" y1="543.2" x2="410.90" y2="551" stroke="#8c8c8c" stroke-width="1.1"/><line x1="213.80" y1="530.50" x2="410.90" y2="530.50" stroke="#707070" stroke-width="1" stroke-dasharray="1.8 2.1"/><line x1="235.70" y1="385.6" x2="235.70" y2="396.0" stroke="#707070" stroke-width="1" stroke-dasharray="1.8 2.1"/><line x1="235.70" y1="530.50" x2="235.70" y2="543.2" stroke="#707070" stroke-width="1" stroke-dasharray="1.8 2.1"/><path d="M262 484.2 L292.5 476 L300.5 475 L292.5 480.5 Z" fill="#ff8a8a"/><polyline points="245.00,487.00 292.50,475.60 305.70,473.80 327.60,469.00 375.80,455.80 384.40,452.70" fill="none" stroke="#383838" stroke-width="0.85" stroke-linejoin="round"/><polyline points="214.70,491.20 235.90,491.20 292.50,480.80 305.70,479.00 327.60,470.90 375.80,456.10 384.40,452.70 406.00,452.70" fill="none" stroke="#1a1aff" stroke-width="1.2" stroke-linejoin="round"/><polyline points="214.70,516.60 235.90,514.70 245.00,514.20 292.50,501.20 305.70,482.00 327.60,418.30 375.80,404.70 384.40,405.00 406.00,398.75" fill="none" stroke="#ff8c1a" stroke-width="1.0" stroke-linejoin="round"/><polyline points="214.70,487.50 235.90,487.20 245.00,486.80 292.50,480.50 305.70,469.80 327.60,413.10 375.80,398.00 384.40,397.20 406.00,389.70" fill="none" stroke="#ff1a1a" stroke-width="1.3" stroke-linejoin="round"/><line x1="292.5" y1="396.0" x2="292.5" y2="530.50" stroke="#ff1a1a" stroke-width="1.1"/></svg>
<div class="t" style="left:-399.80px;width:600px;text-align:right;top:539.16px;font-size:7.59px;font-weight:bold;color:#111;transform:scaleX(0.9091);transform-origin:100% 0;">-200</div>
<div class="t" style="left:-399.80px;width:600px;text-align:right;top:527.08px;font-size:7.59px;font-weight:bold;color:#111;transform:scaleX(0.9091);transform-origin:100% 0;">0</div>
<div class="t" style="left:-399.80px;width:600px;text-align:right;top:515.00px;font-size:7.59px;font-weight:bold;color:#111;transform:scaleX(0.9091);transform-origin:100% 0;">200</div>
<div class="t" style="left:-399.80px;width:600px;text-align:right;top:502.92px;font-size:7.59px;font-weight:bold;color:#111;transform:scaleX(0.9091);transform-origin:100% 0;">400</div>
<div class="t" style="left:-399.80px;width:600px;text-align:right;top:490.84px;font-size:7.59px;font-weight:bold;color:#111;transform:scaleX(0.9091);transform-origin:100% 0;">600</div>
<div class="t" style="left:-399.80px;width:600px;text-align:right;top:478.76px;font-size:7.59px;font-weight:bold;color:#111;transform:scaleX(0.9091);transform-origin:100% 0;">800</div>
<div class="t" style="left:-399.80px;width:600px;text-align:right;top:466.68px;font-size:7.59px;font-weight:bold;color:#111;transform:scaleX(0.9091);transform-origin:100% 0;">1000</div>
<div class="t" style="left:-399.80px;width:600px;text-align:right;top:454.60px;font-size:7.59px;font-weight:bold;color:#111;transform:scaleX(0.9091);transform-origin:100% 0;">1200</div>
<div class="t" style="left:-399.80px;width:600px;text-align:right;top:442.52px;font-size:7.59px;font-weight:bold;color:#111;transform:scaleX(0.9091);transform-origin:100% 0;">1400</div>
<div class="t" style="left:-399.80px;width:600px;text-align:right;top:430.44px;font-size:7.59px;font-weight:bold;color:#111;transform:scaleX(0.9091);transform-origin:100% 0;">1600</div>
<div class="t" style="left:-399.80px;width:600px;text-align:right;top:418.36px;font-size:7.59px;font-weight:bold;color:#111;transform:scaleX(0.9091);transform-origin:100% 0;">1800</div>
<div class="t" style="left:-399.80px;width:600px;text-align:right;top:406.28px;font-size:7.59px;font-weight:bold;color:#111;transform:scaleX(0.9091);transform-origin:100% 0;">2000</div>
<div class="t" style="left:-399.80px;width:600px;text-align:right;top:394.20px;font-size:7.59px;font-weight:bold;color:#111;transform:scaleX(0.9091);transform-origin:100% 0;">2200</div>
<div class="t" style="left:-399.80px;width:600px;text-align:right;top:382.12px;font-size:7.59px;font-weight:bold;color:#111;transform:scaleX(0.9091);transform-origin:100% 0;">2400</div>
<div class="t" style="left:425.20px;top:540.28px;font-size:7.59px;font-weight:bold;color:#111;transform:scaleX(0.9091);transform-origin:0 0;">-2</div>
<div class="t" style="left:425.20px;top:527.08px;font-size:7.59px;font-weight:bold;color:#111;transform:scaleX(0.9091);transform-origin:0 0;">0</div>
<div class="t" style="left:425.20px;top:513.88px;font-size:7.59px;font-weight:bold;color:#111;transform:scaleX(0.9091);transform-origin:0 0;">2</div>
<div class="t" style="left:425.20px;top:500.68px;font-size:7.59px;font-weight:bold;color:#111;transform:scaleX(0.9091);transform-origin:0 0;">4</div>
<div class="t" style="left:425.20px;top:487.48px;font-size:7.59px;font-weight:bold;color:#111;transform:scaleX(0.9091);transform-origin:0 0;">6</div>
<div class="t" style="left:425.20px;top:474.28px;font-size:7.59px;font-weight:bold;color:#111;transform:scaleX(0.9091);transform-origin:0 0;">8</div>
<div class="t" style="left:425.20px;top:461.08px;font-size:7.59px;font-weight:bold;color:#111;transform:scaleX(0.9091);transform-origin:0 0;">10</div>
<div class="t" style="left:425.20px;top:447.88px;font-size:7.59px;font-weight:bold;color:#111;transform:scaleX(0.9091);transform-origin:0 0;">12</div>
<div class="t" style="left:425.20px;top:434.68px;font-size:7.59px;font-weight:bold;color:#111;transform:scaleX(0.9091);transform-origin:0 0;">14</div>
<div class="t" style="left:425.20px;top:421.48px;font-size:7.59px;font-weight:bold;color:#111;transform:scaleX(0.9091);transform-origin:0 0;">16</div>
<div class="t" style="left:425.20px;top:408.28px;font-size:7.59px;font-weight:bold;color:#111;transform:scaleX(0.9091);transform-origin:0 0;">18</div>
<div class="t" style="left:425.20px;top:395.08px;font-size:7.59px;font-weight:bold;color:#111;transform:scaleX(0.9091);transform-origin:0 0;">20</div>
<div class="t" style="left:425.20px;top:381.88px;font-size:7.59px;font-weight:bold;color:#111;transform:scaleX(0.9091);transform-origin:0 0;">22</div>
<div class="t" style="left:-86.20px;width:600px;text-align:center;top:559.13px;font-size:6.93px;font-weight:normal;color:#444;transform:scaleX(0.9091);transform-origin:50% 0;-webkit-text-stroke:0.12px #444;">-0.05</div>
<div class="t" style="left:-64.30px;width:600px;text-align:center;top:559.13px;font-size:6.93px;font-weight:normal;color:#444;transform:scaleX(0.9091);transform-origin:50% 0;-webkit-text-stroke:0.12px #444;">0.00</div>
<div class="t" style="left:-42.40px;width:600px;text-align:center;top:559.13px;font-size:6.93px;font-weight:normal;color:#444;transform:scaleX(0.9091);transform-origin:50% 0;-webkit-text-stroke:0.12px #444;">0.05</div>
<div class="t" style="left:-20.50px;width:600px;text-align:center;top:559.13px;font-size:6.93px;font-weight:normal;color:#444;transform:scaleX(0.9091);transform-origin:50% 0;-webkit-text-stroke:0.12px #444;">0.10</div>
<div class="t" style="left:1.40px;width:600px;text-align:center;top:559.13px;font-size:6.93px;font-weight:normal;color:#444;transform:scaleX(0.9091);transform-origin:50% 0;-webkit-text-stroke:0.12px #444;">0.15</div>
<div class="t" style="left:23.30px;width:600px;text-align:center;top:559.13px;font-size:6.93px;font-weight:normal;color:#444;transform:scaleX(0.9091);transform-origin:50% 0;-webkit-text-stroke:0.12px #444;">0.20</div>
<div class="t" style="left:45.20px;width:600px;text-align:center;top:559.13px;font-size:6.93px;font-weight:normal;color:#444;transform:scaleX(0.9091);transform-origin:50% 0;-webkit-text-stroke:0.12px #444;">0.25</div>
<div class="t" style="left:67.10px;width:600px;text-align:center;top:559.13px;font-size:6.93px;font-weight:normal;color:#444;transform:scaleX(0.9091);transform-origin:50% 0;-webkit-text-stroke:0.12px #444;">0.30</div>
<div class="t" style="left:89.00px;width:600px;text-align:center;top:559.13px;font-size:6.93px;font-weight:normal;color:#444;transform:scaleX(0.9091);transform-origin:50% 0;-webkit-text-stroke:0.12px #444;">0.35</div>
<div class="t" style="left:110.90px;width:600px;text-align:center;top:559.13px;font-size:6.93px;font-weight:normal;color:#444;transform:scaleX(0.9091);transform-origin:50% 0;-webkit-text-stroke:0.12px #444;">0.40</div>
<div class="t" style="left:-59.90px;width:600px;text-align:center;top:533.15px;font-size:7.15px;font-weight:bold;color:#111;transform:scaleX(0.9091);transform-origin:50% 0;">1</div>
<div class="t" style="left:-31.50px;width:600px;text-align:center;top:533.15px;font-size:7.15px;font-weight:bold;color:#111;transform:scaleX(0.9091);transform-origin:50% 0;">2</div>
<div class="t" style="left:-1.00px;width:600px;text-align:center;top:533.15px;font-size:7.15px;font-weight:bold;color:#111;transform:scaleX(0.9091);transform-origin:50% 0;">3</div>
<div class="t" style="left:16.50px;width:600px;text-align:center;top:533.15px;font-size:7.15px;font-weight:bold;color:#111;transform:scaleX(0.9091);transform-origin:50% 0;">4</div>
<div class="t" style="left:51.60px;width:600px;text-align:center;top:533.15px;font-size:7.15px;font-weight:bold;color:#111;transform:scaleX(0.9091);transform-origin:50% 0;">5</div>
<div class="t" style="left:80.10px;width:600px;text-align:center;top:533.15px;font-size:7.15px;font-weight:bold;color:#111;transform:scaleX(0.9091);transform-origin:50% 0;">6</div>
<div class="t" style="left:-86.20px;width:600px;text-align:center;top:365.51px;font-size:7.32px;font-weight:bold;color:#111;transform:scaleX(0.9091);transform-origin:50% 0;">Pressão (Pa)</div>
<div class="t" style="left:110.60px;width:600px;text-align:center;top:365.18px;font-size:7.70px;font-weight:bold;color:#111;transform:scaleX(0.9091);transform-origin:50% 0;">Temperatura (°C)</div>
<div class="t" style="left:12.20px;width:600px;text-align:center;top:578.65px;font-size:7.26px;font-weight:bold;color:#111;transform:scaleX(0.9091);transform-origin:50% 0;">Espessura (m)</div>
<div class="r" style="left:210px;top:600px;width:9px;height:8px;background:#000000;"></div>
<svg class="r" style="left:222px;top:601px;" width="7" height="7" viewBox="0 0 7 7"><rect x="0" y="0" width="7" height="7" rx="1" fill="#1a6ac8"/><path d="M1.8 3.7 L3 4.8 L5.3 2.4" stroke="#b8dcff" stroke-width="0.7" fill="none"/></svg>
<div class="t" style="left:230.50px;top:601.62px;font-size:6.71px;font-weight:normal;color:#333;transform:scaleX(0.9091);transform-origin:0 0;-webkit-text-stroke:0.12px #333;">Pressão de vapor teórica (Pa)</div>
<div class="r" style="left:317.5px;top:600px;width:9px;height:8px;background:#0000ff;"></div>
<svg class="r" style="left:329.5px;top:601px;" width="7" height="7" viewBox="0 0 7 7"><rect x="0" y="0" width="7" height="7" rx="1" fill="#1a6ac8"/><path d="M1.8 3.7 L3 4.8 L5.3 2.4" stroke="#b8dcff" stroke-width="0.7" fill="none"/></svg>
<div class="t" style="left:338.00px;top:601.62px;font-size:6.71px;font-weight:normal;color:#333;transform:scaleX(0.9091);transform-origin:0 0;-webkit-text-stroke:0.12px #333;">Pressão de vapor real (Pa)</div>
<div class="r" style="left:210px;top:612px;width:9px;height:8px;background:#ff0000;"></div>
<svg class="r" style="left:222px;top:613px;" width="7" height="7" viewBox="0 0 7 7"><rect x="0" y="0" width="7" height="7" rx="1" fill="#1a6ac8"/><path d="M1.8 3.7 L3 4.8 L5.3 2.4" stroke="#b8dcff" stroke-width="0.7" fill="none"/></svg>
<div class="t" style="left:230.50px;top:613.62px;font-size:6.71px;font-weight:normal;color:#333;transform:scaleX(0.9091);transform-origin:0 0;-webkit-text-stroke:0.12px #333;">Pressão de saturação (Pa)</div>
<div class="r" style="left:317.5px;top:612px;width:9px;height:8px;background:#ff8000;"></div>
<svg class="r" style="left:329.5px;top:613px;" width="7" height="7" viewBox="0 0 7 7"><rect x="0" y="0" width="7" height="7" rx="1" fill="#1a6ac8"/><path d="M1.8 3.7 L3 4.8 L5.3 2.4" stroke="#b8dcff" stroke-width="0.7" fill="none"/></svg>
<div class="t" style="left:338.00px;top:613.62px;font-size:6.71px;font-weight:normal;color:#333;transform:scaleX(0.9091);transform-origin:0 0;-webkit-text-stroke:0.12px #333;">Temperatura (°C)</div>
<div class="r" style="left:613px;top:306px;width:398px;height:10px;background:#d9d9d9;box-sizing:border-box;border:1px solid #d0d0d0;border-bottom:none;"></div>
<div class="r" style="left:613px;top:316px;width:398px;height:310px;background:#ffffff;"></div>
<div class="t" style="left:617.20px;top:308.83px;font-size:6.93px;font-weight:normal;color:#333;transform:scaleX(0.9091);transform-origin:0 0;-webkit-text-stroke:0.12px #333;">Quantidade de água saturada/evaporada acumulada em interfaces</div>
<svg class="r" style="left:616px;top:318.5px;" width="10" height="11" viewBox="0 0 10 11"><path d="M1.8 8.2 L1.8 4.5 Q2 1 5.2 1 Q8.5 1.2 8.2 4" fill="none" stroke="#1a2ef0" stroke-width="1.4"/><path d="M0 7 L1.8 9.6 L3.6 7 Z" fill="#1a2ef0"/><circle cx="5" cy="4.6" r="2.1" fill="#fff" stroke="#666" stroke-width="0.7"/><path d="M6.5 6.2 L8.8 8.6" stroke="#111" stroke-width="1.2"/></svg>
<svg class="r" style="left:630px;top:318.5px;" width="10" height="11" viewBox="0 0 10 11"><circle cx="4.6" cy="4.6" r="3.7" fill="#fff" stroke="#777" stroke-width="0.8"/><path d="M4.6 1.8 L5.6 3 L3.6 3 Z M4.6 7.4 L5.6 6.2 L3.6 6.2 Z M1.8 4.6 L3 3.6 L3 5.6 Z M7.4 4.6 L6.2 3.6 L6.2 5.6 Z" fill="#1a2ef0"/><circle cx="4.6" cy="4.6" r="0.8" fill="#1a2ef0"/><path d="M7.3 7.3 L9.3 9.3" stroke="#111" stroke-width="1.2"/></svg>
<svg class="r" style="left:643px;top:318.5px;" width="10" height="11" viewBox="0 0 10 11"><circle cx="4.4" cy="4.6" r="3.7" fill="#fff" stroke="#777" stroke-width="0.8"/><path d="M2.2 4.8 L3.6 4.8 M4.2 3.4 Q5.6 2.8 5.8 3.8 Q5.6 4.8 4.2 6 L6 6" fill="none" stroke="#3040e0" stroke-width="0.7"/><path d="M7.1 7.3 L9.2 9.4" stroke="#111" stroke-width="1.2"/></svg>
<svg class="r" style="left:656px;top:318.5px;" width="10" height="11" viewBox="0 0 10 11"><path d="M7.6 2.8 A3.4 3.4 0 1 0 3 7.8" fill="none" stroke="#1a3af0" stroke-width="1.2"/><path d="M6.2 1.2 L8.8 0.6 L8.6 3.6 Z" fill="#1a3af0"/><path d="M3 9 L7.8 4.8" stroke="#9a8a30" stroke-width="1.6"/><path d="M7.2 5.2 L8.4 4.2" stroke="#d83020" stroke-width="1.6"/><path d="M2 9.4 L4 9.4" stroke="#777" stroke-width="0.6"/></svg>
<svg class="r" style="left:670px;top:318.5px;" width="10" height="11" viewBox="0 0 10 11"><rect x="0.6" y="4" width="3.8" height="5.2" fill="none" stroke="#9ab0f0" stroke-width="0.7"/><circle cx="4" cy="3.4" r="2.6" fill="#fff" stroke="#777" stroke-width="0.8"/><path d="M2.8 3.4 L5 3.4" stroke="#3050e0" stroke-width="0.8"/><path d="M5.9 5.3 L8.6 7.8" stroke="#111" stroke-width="1.2"/></svg>
<svg class="r" style="left:683px;top:318.5px;" width="10" height="11" viewBox="0 0 10 11"><path d="M2.6 5.2 L2.6 2.8 Q3.2 2 3.8 2.8 L3.8 4.6 L3.8 1.5 Q4.4 0.7 5 1.5 L5 4.6 L5 1.8 Q5.6 1.1 6.2 1.8 L6.2 4.6 L6.2 2.8 Q6.8 2.1 7.4 2.8 L7.4 6.6 Q7.2 9.2 4.8 9.2 Q3 9.2 2 7.2 L1 5.4 Q1.6 4.6 2.6 5.6" fill="#fff" stroke="#6a6a6a" stroke-width="0.7"/></svg>
<svg class="r" style="left:697px;top:318.5px;" width="10" height="11" viewBox="0 0 10 11"><rect x="0.5" y="1.5" width="8" height="8" fill="#fff" stroke="#888" stroke-width="0.8"/><rect x="0.2" y="0" width="8.6" height="2" fill="#38d0d8"/><path d="M2.2 4.2 L6.6 7.6" stroke="#1a2ef0" stroke-width="1.1"/><path d="M7.2 8.2 L4.6 8 L6.8 5.8 Z" fill="#1a2ef0"/></svg>
<svg class="r" style="left:0;top:0" width="1024" height="640" viewBox="0 0 1024 640"><line x1="724" y1="368.20" x2="926.0" y2="368.20" stroke="#8c8c8c" stroke-width="1.1"/><line x1="724" y1="559.00" x2="926.0" y2="559.00" stroke="#8c8c8c" stroke-width="1.1"/><line x1="724" y1="539.92" x2="734.5" y2="539.92" stroke="#8c8c8c" stroke-width="1.1"/><line x1="734.5" y1="539.92" x2="926.0" y2="539.92" stroke="#707070" stroke-width="1" stroke-dasharray="1.8 2.1"/><line x1="724" y1="520.84" x2="734.5" y2="520.84" stroke="#8c8c8c" stroke-width="1.1"/><line x1="734.5" y1="520.84" x2="926.0" y2="520.84" stroke="#707070" stroke-width="1" stroke-dasharray="1.8 2.1"/><line x1="724" y1="501.76" x2="734.5" y2="501.76" stroke="#8c8c8c" stroke-width="1.1"/><line x1="734.5" y1="501.76" x2="926.0" y2="501.76" stroke="#707070" stroke-width="1" stroke-dasharray="1.8 2.1"/><line x1="724" y1="482.68" x2="734.5" y2="482.68" stroke="#8c8c8c" stroke-width="1.1"/><line x1="734.5" y1="482.68" x2="926.0" y2="482.68" stroke="#707070" stroke-width="1" stroke-dasharray="1.8 2.1"/><line x1="724" y1="463.60" x2="734.5" y2="463.60" stroke="#8c8c8c" stroke-width="1.1"/><line x1="734.5" y1="463.60" x2="926.0" y2="463.60" stroke="#707070" stroke-width="1" stroke-dasharray="1.8 2.1"/><line x1="724" y1="444.52" x2="734.5" y2="444.52" stroke="#8c8c8c" stroke-width="1.1"/><line x1="734.5" y1="444.52" x2="926.0" y2="444.52" stroke="#707070" stroke-width="1" stroke-dasharray="1.8 2.1"/><line x1="724" y1="425.44" x2="734.5" y2="425.44" stroke="#8c8c8c" stroke-width="1.1"/><line x1="734.5" y1="425.44" x2="926.0" y2="425.44" stroke="#707070" stroke-width="1" stroke-dasharray="1.8 2.1"/><line x1="724" y1="406.36" x2="734.5" y2="406.36" stroke="#8c8c8c" stroke-width="1.1"/><line x1="734.5" y1="406.36" x2="926.0" y2="406.36" stroke="#707070" stroke-width="1" stroke-dasharray="1.8 2.1"/><line x1="724" y1="387.28" x2="734.5" y2="387.28" stroke="#8c8c8c" stroke-width="1.1"/><line x1="734.5" y1="387.28" x2="926.0" y2="387.28" stroke="#707070" stroke-width="1" stroke-dasharray="1.8 2.1"/><rect x="735.30" y="460.17" width="13.6" height="98.83" fill="#ffff99" stroke="#c8c860" stroke-width="0.8"/><rect x="751.30" y="470.28" width="13.6" height="88.72" fill="#ffff99" stroke="#c8c860" stroke-width="0.8"/><rect x="751.30" y="543.93" width="13.6" height="15.07" fill="#ffc8aa" stroke="#c88868" stroke-width="0.8"/><rect x="767.30" y="528.28" width="13.6" height="30.72" fill="#ffff99" stroke="#c8c860" stroke-width="0.8"/><rect x="783.30" y="380.03" width="13.6" height="178.97" fill="#ffc8aa" stroke="#c88868" stroke-width="0.8"/><line x1="734.5" y1="368.20" x2="734.5" y2="568.8" stroke="#555" stroke-width="1.1"/><line x1="926.0" y1="368.20" x2="926.0" y2="568.8" stroke="#8c8c8c" stroke-width="1.1"/><line x1="734.50" y1="559.00" x2="734.50" y2="568.8" stroke="#555" stroke-width="1.1"/><line x1="750.50" y1="559.00" x2="750.50" y2="568.8" stroke="#555" stroke-width="1.1"/><line x1="766.50" y1="559.00" x2="766.50" y2="568.8" stroke="#555" stroke-width="1.1"/><line x1="782.50" y1="559.00" x2="782.50" y2="568.8" stroke="#555" stroke-width="1.1"/><line x1="798.50" y1="559.00" x2="798.50" y2="568.8" stroke="#555" stroke-width="1.1"/><line x1="814.50" y1="559.00" x2="814.50" y2="568.8" stroke="#555" stroke-width="1.1"/><line x1="830.50" y1="559.00" x2="830.50" y2="568.8" stroke="#555" stroke-width="1.1"/><line x1="846.50" y1="559.00" x2="846.50" y2="568.8" stroke="#555" stroke-width="1.1"/><line x1="862.50" y1="559.00" x2="862.50" y2="568.8" stroke="#555" stroke-width="1.1"/><line x1="878.50" y1="559.00" x2="878.50" y2="568.8" stroke="#555" stroke-width="1.1"/><line x1="894.50" y1="559.00" x2="894.50" y2="568.8" stroke="#555" stroke-width="1.1"/><line x1="910.50" y1="559.00" x2="910.50" y2="568.8" stroke="#555" stroke-width="1.1"/><line x1="926.50" y1="559.00" x2="926.50" y2="568.8" stroke="#555" stroke-width="1.1"/></svg>
<div class="t" style="left:116.90px;width:600px;text-align:right;top:554.52px;font-size:9.07px;font-weight:normal;color:#3a3a3a;transform:scaleX(0.8929);transform-origin:100% 0;-webkit-text-stroke:0.12px #3a3a3a;">0</div>
<div class="t" style="left:116.90px;width:600px;text-align:right;top:535.44px;font-size:9.07px;font-weight:normal;color:#3a3a3a;transform:scaleX(0.8929);transform-origin:100% 0;-webkit-text-stroke:0.12px #3a3a3a;">100</div>
<div class="t" style="left:116.90px;width:600px;text-align:right;top:516.36px;font-size:9.07px;font-weight:normal;color:#3a3a3a;transform:scaleX(0.8929);transform-origin:100% 0;-webkit-text-stroke:0.12px #3a3a3a;">200</div>
<div class="t" style="left:116.90px;width:600px;text-align:right;top:497.28px;font-size:9.07px;font-weight:normal;color:#3a3a3a;transform:scaleX(0.8929);transform-origin:100% 0;-webkit-text-stroke:0.12px #3a3a3a;">300</div>
<div class="t" style="left:116.90px;width:600px;text-align:right;top:478.20px;font-size:9.07px;font-weight:normal;color:#3a3a3a;transform:scaleX(0.8929);transform-origin:100% 0;-webkit-text-stroke:0.12px #3a3a3a;">400</div>
<div class="t" style="left:116.90px;width:600px;text-align:right;top:459.12px;font-size:9.07px;font-weight:normal;color:#3a3a3a;transform:scaleX(0.8929);transform-origin:100% 0;-webkit-text-stroke:0.12px #3a3a3a;">500</div>
<div class="t" style="left:116.90px;width:600px;text-align:right;top:440.04px;font-size:9.07px;font-weight:normal;color:#3a3a3a;transform:scaleX(0.8929);transform-origin:100% 0;-webkit-text-stroke:0.12px #3a3a3a;">600</div>
<div class="t" style="left:116.90px;width:600px;text-align:right;top:420.96px;font-size:9.07px;font-weight:normal;color:#3a3a3a;transform:scaleX(0.8929);transform-origin:100% 0;-webkit-text-stroke:0.12px #3a3a3a;">700</div>
<div class="t" style="left:116.90px;width:600px;text-align:right;top:401.88px;font-size:9.07px;font-weight:normal;color:#3a3a3a;transform:scaleX(0.8929);transform-origin:100% 0;-webkit-text-stroke:0.12px #3a3a3a;">800</div>
<div class="t" style="left:116.90px;width:600px;text-align:right;top:382.80px;font-size:9.07px;font-weight:normal;color:#3a3a3a;transform:scaleX(0.8929);transform-origin:100% 0;-webkit-text-stroke:0.12px #3a3a3a;">900</div>
<div class="t" style="left:116.90px;width:600px;text-align:right;top:363.72px;font-size:9.07px;font-weight:normal;color:#3a3a3a;transform:scaleX(0.8929);transform-origin:100% 0;-webkit-text-stroke:0.12px #3a3a3a;">1000</div>
<div class="t" style="left:442.50px;width:600px;text-align:center;top:577.69px;font-size:8.40px;font-weight:normal;color:#3a3a3a;transform:scaleX(0.8333);transform-origin:50% 0;-webkit-text-stroke:0.12px #3a3a3a;">Jan</div>
<div class="t" style="left:458.50px;width:600px;text-align:center;top:577.69px;font-size:8.40px;font-weight:normal;color:#3a3a3a;transform:scaleX(0.8333);transform-origin:50% 0;-webkit-text-stroke:0.12px #3a3a3a;">Fev</div>
<div class="t" style="left:474.50px;width:600px;text-align:center;top:577.69px;font-size:8.40px;font-weight:normal;color:#3a3a3a;transform:scaleX(0.8333);transform-origin:50% 0;-webkit-text-stroke:0.12px #3a3a3a;">Mar</div>
<div class="t" style="left:490.50px;width:600px;text-align:center;top:577.69px;font-size:8.40px;font-weight:normal;color:#3a3a3a;transform:scaleX(0.8333);transform-origin:50% 0;-webkit-text-stroke:0.12px #3a3a3a;">Abr</div>
<div class="t" style="left:506.50px;width:600px;text-align:center;top:577.69px;font-size:8.40px;font-weight:normal;color:#3a3a3a;transform:scaleX(0.8333);transform-origin:50% 0;-webkit-text-stroke:0.12px #3a3a3a;">Mai</div>
<div class="t" style="left:522.50px;width:600px;text-align:center;top:577.69px;font-size:8.40px;font-weight:normal;color:#3a3a3a;transform:scaleX(0.8333);transform-origin:50% 0;-webkit-text-stroke:0.12px #3a3a3a;">Jun</div>
<div class="t" style="left:538.50px;width:600px;text-align:center;top:577.69px;font-size:8.40px;font-weight:normal;color:#3a3a3a;transform:scaleX(0.8333);transform-origin:50% 0;-webkit-text-stroke:0.12px #3a3a3a;">Jul</div>
<div class="t" style="left:554.50px;width:600px;text-align:center;top:577.69px;font-size:8.40px;font-weight:normal;color:#3a3a3a;transform:scaleX(0.8333);transform-origin:50% 0;-webkit-text-stroke:0.12px #3a3a3a;">Ago</div>
<div class="t" style="left:570.50px;width:600px;text-align:center;top:577.69px;font-size:8.40px;font-weight:normal;color:#3a3a3a;transform:scaleX(0.8333);transform-origin:50% 0;-webkit-text-stroke:0.12px #3a3a3a;">Set</div>
<div class="t" style="left:586.50px;width:600px;text-align:center;top:577.69px;font-size:8.40px;font-weight:normal;color:#3a3a3a;transform:scaleX(0.8333);transform-origin:50% 0;-webkit-text-stroke:0.12px #3a3a3a;">Out</div>
<div class="t" style="left:602.50px;width:600px;text-align:center;top:577.69px;font-size:8.40px;font-weight:normal;color:#3a3a3a;transform:scaleX(0.8333);transform-origin:50% 0;-webkit-text-stroke:0.12px #3a3a3a;">Nov</div>
<div class="t" style="left:618.50px;width:600px;text-align:center;top:577.69px;font-size:8.40px;font-weight:normal;color:#3a3a3a;transform:scaleX(0.8333);transform-origin:50% 0;-webkit-text-stroke:0.12px #3a3a3a;">Dez</div>
<div class="t" style="left:434.20px;width:600px;text-align:center;top:343.60px;font-size:8.50px;font-weight:bold;color:#111;transform-origin:50% 0;">Ma (g/m<sup>2</sup>·Mês)</div>
<div class="r" style="left:611px;top:462px;width:1px;height:8px;background:transparent;background:repeating-linear-gradient(180deg,#a8a8a8 0 1px,transparent 1px 2px);"></div>
<div class="r" style="left:0px;top:638px;width:1024px;height:1px;background:#d8dcdc;"></div>
<div class="r" style="left:0px;top:639px;width:1024px;height:1px;background:#d47a80;"></div>
</body></html>
